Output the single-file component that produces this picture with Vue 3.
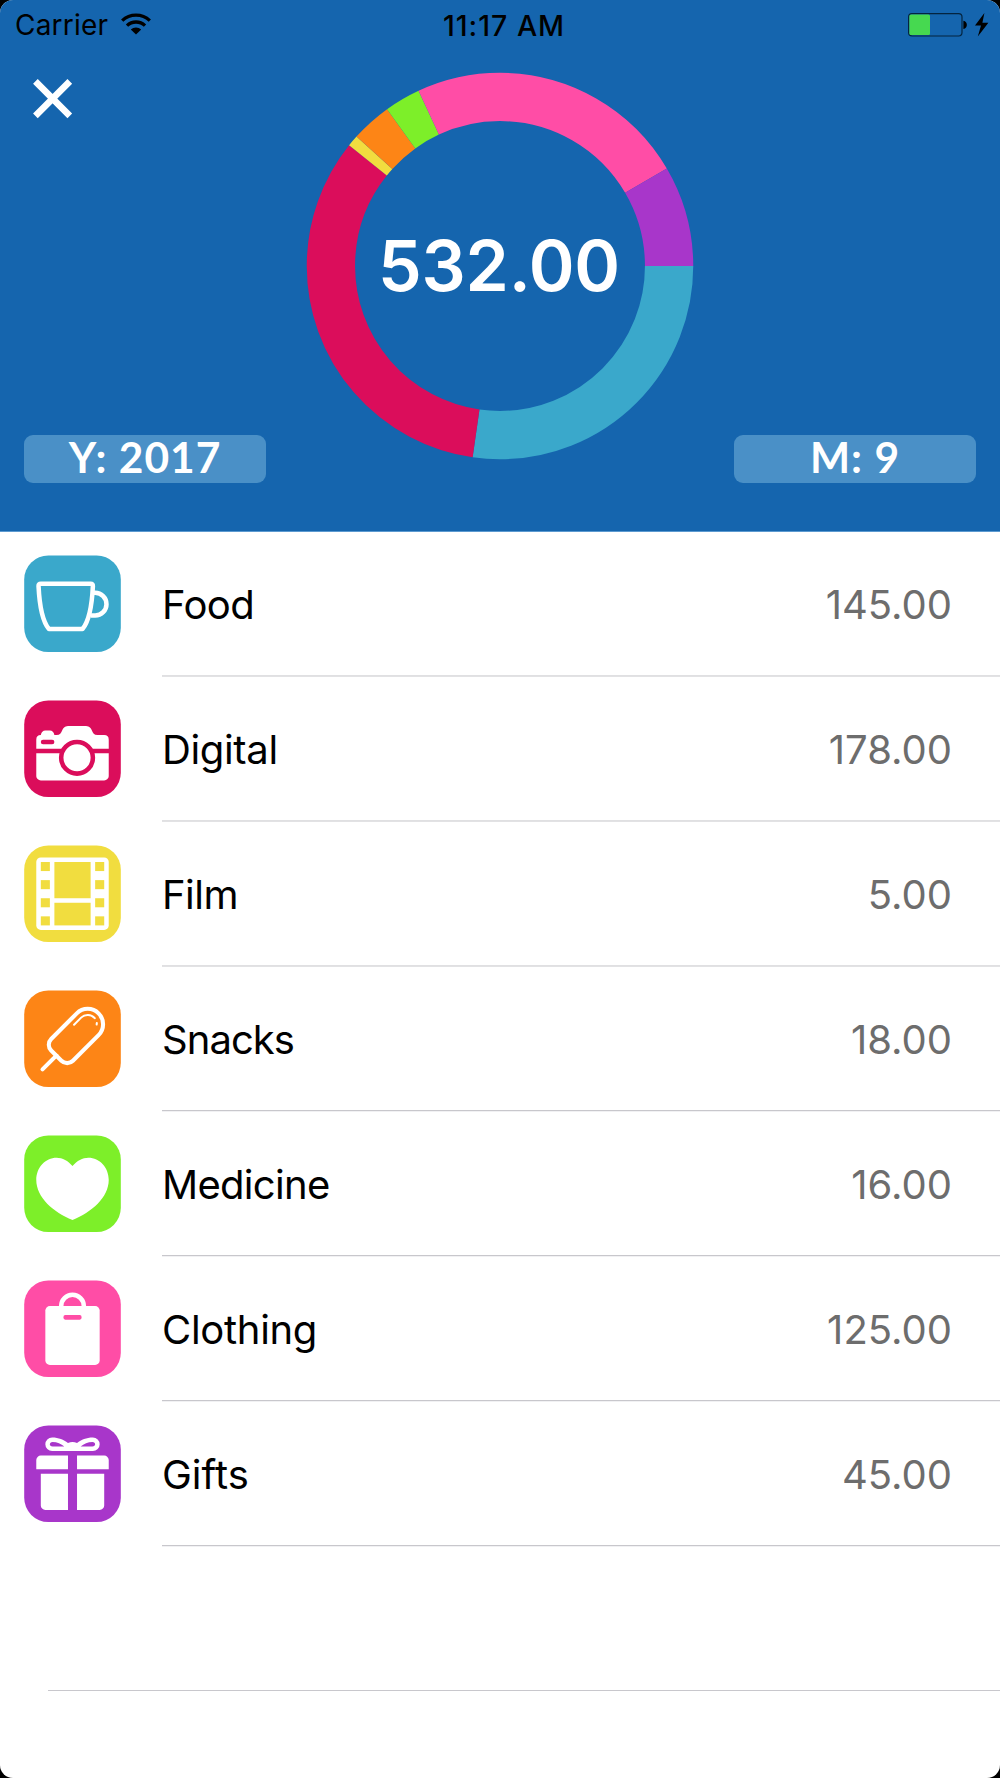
<script setup>
const RADIUS = 169.1
const LENGTH = 2 * Math.PI * RADIUS

const items = [
  { name: 'Food', amount: 145, color: '#3aa8cb', icon: 'cup', ls: -0.6 },
  { name: 'Digital', amount: 178, color: '#db0d5b', icon: 'camera', ls: -0.35 },
  { name: 'Film', amount: 5, color: '#f1dd3f', icon: 'film', ls: -0.5 },
  { name: 'Snacks', amount: 18, color: '#fd8516', icon: 'popsicle', ls: -0.95 },
  { name: 'Medicine', amount: 16, color: '#7def29', icon: 'heart', ls: -0.7 },
  { name: 'Clothing', amount: 125, color: '#ff4da6', icon: 'bag', ls: -0.3 },
  { name: 'Gifts', amount: 45, color: '#a836ca', icon: 'gift', ls: 0 },
]

const total = items.reduce((sum, item) => sum + item.amount, 0)
let before = 0
const segments = items.map((item) => {
  const segment = {
    color: item.color,
    dash: `${(item.amount / total) * LENGTH} ${LENGTH}`,
    offset: (-before / total) * LENGTH,
  }
  before += item.amount
  return segment
})
</script>

<template>
  <div class="screen">
    <header class="header">
      <div class="status">
        <div class="carrier">
          <span>Carrier</span>
          <svg class="wifi" width="30" height="22" viewBox="0 0 30 22">
            <g fill="none" stroke="#000" stroke-width="3.3">
              <path d="M1.2 7.6A20 20 0 0 1 28.8 7.6" />
              <path d="M6 12.6A13 13 0 0 1 24 12.6" />
            </g>
            <path d="M9.8 16.6A7.4 7.4 0 0 1 20.2 16.6L15 21.6Z" />
          </svg>
        </div>
        <div class="time">11:17 AM</div>
        <div class="power">
          <svg width="81" height="24" viewBox="0 0 81 24">
            <rect x="0.6" y="0.6" width="53.4" height="22.4" rx="3.4" fill="none" stroke="#04243f" stroke-width="1.2" />
            <rect x="1.4" y="1.4" width="20.6" height="20.6" rx="1.5" fill="#46d950" />
            <path d="M55.400 7.700c4.600.6 4.600 7.600 0 8.200z" />
            <path d="M76.400 0L67 12.600h6L69.800 23.400 80.400 9.800h-6z" />
          </svg>
        </div>
      </div>
      <button class="close" aria-label="Close">
        <svg width="40" height="40" viewBox="0 0 40 40">
          <path d="M2.400 2.400L36.800 36.800M36.800 2.400L2.400 36.800" stroke="#fff" stroke-width="6.600" />
        </svg>
      </button>
      <div class="summary">
        <div class="pill">Y: 2017</div>
        <div class="chart">
          <svg width="388" height="388" viewBox="-194 -194 388 388">
            <circle
              v-for="s in segments"
              :key="s.color"
              :r="RADIUS"
              fill="none"
              :stroke="s.color"
              stroke-width="48.3"
              :stroke-dasharray="s.dash"
              :stroke-dashoffset="s.offset"
            />
          </svg>
          <div class="total">{{ total.toFixed(2) }}</div>
        </div>
        <div class="pill">M: 9</div>
      </div>
    </header>

    <main class="list">
      <div v-for="(item, i) in items" :key="item.name" class="row">
        <svg class="icon" viewBox="-2.711 -2.755 21.640 21.640">
          <rect x="-2.667" y="-2.667" width="21.333" height="21.333" rx="5.333" :fill="item.color" />
          <g v-if="item.icon === 'cup'" fill="none" stroke="#fff" stroke-linejoin="round">
            <path d="M1 3.600H12Q12.500 3.600 12.500 4.100C12.300 8.300 11.700 11.800 10.200 13.600H2.800C1.300 11.800.7 8.300.5 4.100Q.5 3.600 1 3.600Z" />
            <path d="M12.600 5.600H13a2.500 2.500 0 0 1 0 5H12" />
          </g>
          <g v-else-if="item.icon === 'camera'" fill="#fff">
            <path d="M0 8V6Q0 5 1 5Q1.200 4 2 4H3Q3.800 4 4 5H4.500C6 5 5.400 3 7 3H11C12.600 3 12 5 13.500 5H15Q16 5 16 6V8Z" />
            <path d="M0 9H16V14a1 1 0 0 1-1 1H1a1 1 0 0 1-1-1Z" />
            <rect x="1" y="6" width="3" height="1" rx=".5" :fill="item.color" />
            <circle cx="9" cy="10" r="3.500" :stroke="item.color" />
          </g>
          <g v-else-if="item.icon === 'film'">
            <rect width="16" height="16" rx="1" fill="#fff" />
            <g :fill="item.color">
              <template v-for="y in [1, 5, 9, 13]" :key="y">
                <rect x="1" :y="y" width="2" height="2" />
                <rect x="13" :y="y" width="2" height="2" />
              </template>
              <rect x="4" y="1" width="8" height="8" />
              <rect x="4" y="10" width="8" height="5" />
            </g>
          </g>
          <g
            v-else-if="item.icon === 'popsicle'"
            transform="translate(11.350 4.800) rotate(45)"
            fill="none"
            stroke="#fff"
            stroke-width=".9"
            stroke-linecap="round"
          >
            <path d="M-3.400 0A3.400 3.400 0 0 1 3.400 0V8A1.800 1.800 0 0 1 1.600 9.800H-1.600A1.800 1.800 0 0 1-3.400 8Z" />
            <path d="M0 9.800V14.100" />
            <path d="M-2.050 2.200V0A2.050 2.050 0 0 1 .15-2.050M1.250-1.600L1.450-1.350" stroke-width=".45" />
          </g>
          <path
            v-else-if="item.icon === 'heart'"
            fill="#fff"
            d="M8 4.100C9 2.900 10.200 2.250 11.500 2.250C14 2.250 16 4.400 16 7.200C16 11 12.200 14.400 8 16C3.800 14.400 0 11 0 7.200C0 4.400 2 2.250 4.500 2.250C5.800 2.250 7 2.900 8 4.100Z"
          />
          <g v-else-if="item.icon === 'bag'">
            <rect x="2" y="3" width="12" height="13" rx="1" fill="#fff" />
            <path d="M5.500 3.500V3a2.500 2.500 0 0 1 5 0v.5" fill="none" stroke="#fff" />
            <rect x="6" y="5" width="4" height="1" rx=".4" :fill="item.color" />
          </g>
          <g v-else fill="#fff">
            <path
              fill-rule="evenodd"
              d="M3.500 0C5 0 6 .5 7 1.200Q8 .8 9 1.200C10 .5 11 0 12.500 0a1.500 1.500 0 0 1 0 3h-9a1.500 1.500 0 0 1 0-3ZM3.600 1C2.800 1 2.800 2 3.600 2H6.200C5.500 1.400 4.600 1 3.600 1ZM12.400 1C13.200 1 13.200 2 12.400 2H9.800C10.500 1.400 11.400 1 12.400 1Z"
            />
            <path d="M0 7V5a1 1 0 0 1 1-1H7V7ZM9 7V4h6a1 1 0 0 1 1 1V7ZM1 8H7v8H2a1 1 0 0 1-1-1ZM9 8h6v7a1 1 0 0 1-1 1H9Z" />
          </g>
        </svg>
        <div class="content" :class="{ soft: i < 3 }">
          <span class="name" :style="{ letterSpacing: item.ls + 'px' }">{{ item.name }}</span>
          <span class="amount">{{ item.amount.toFixed(2) }}</span>
        </div>
      </div>
      <div class="row blank"></div>
    </main>
  </div>
</template>

<style>
body {
  margin: 0;
  background: #000;
}
</style>

<style scoped>
.screen {
  width: 1000px;
  height: 1778px;
  overflow: hidden;
  border-radius: 13px;
  background: #fff;
  font-family: Inter, "Liberation Sans", sans-serif;
}
.header {
  position: relative;
  box-sizing: border-box;
  height: 532px;
  background: #1565ae;
  border-bottom: 1px solid #5c9ad0;
}
.status {
  display: grid;
  grid-template-columns: 1fr auto 1fr;
  height: 51px;
  font-size: 28px;
  line-height: 51px;
}
.carrier {
  display: flex;
  gap: 13px;
  padding-left: 15px;
  letter-spacing: 0.2px;
}
.wifi {
  margin-top: 13px;
}
.time {
  padding-left: 8px;
  font-size: 28.5px;
  font-weight: 500;
  letter-spacing: 1px;
}
.power {
  display: flex;
  justify-content: flex-end;
  padding: 13px 11px 0 0;
}
.close {
  position: absolute;
  left: 33px;
  top: 79px;
  width: 40px;
  height: 40px;
  padding: 0;
  border: 0;
  background: none;
}
.close svg {
  display: block;
}
.summary {
  display: flex;
  justify-content: space-between;
  align-items: flex-end;
  padding: 21px 24px 0;
}
.pill {
  width: 242px;
  height: 48px;
  margin-bottom: -23px;
  border-radius: 9px;
  background: #4a90c7;
  color: #fff;
  font: 700 42.5px/44px Lato, sans-serif;
  letter-spacing: 1px;
  text-align: center;
}
.chart {
  display: grid;
  place-items: center;
}
.chart > * {
  grid-area: 1 / 1;
}
.total {
  padding-right: 2px;
  color: #fff;
  font-size: 69.5px;
  font-weight: 570;
  letter-spacing: -0.2px;
}
.row {
  display: flex;
  align-items: center;
  height: 145px;
}
.icon {
  width: 98px;
  height: 98px;
  margin: 0 40px 1px 24px;
}
.content {
  flex: 1;
  display: flex;
  justify-content: space-between;
  align-items: center;
  box-sizing: border-box;
  height: 145px;
  padding-right: 48px;
  border-bottom: 1px solid #f1f1f3;
  box-shadow: inset 0 -1px #c8c7cc;
  font-size: 40px;
}
.content.soft {
  border-color: #e2e2e4;
  box-shadow: inset 0 -1px #e0e0e2;
}
.amount {
  color: #6d6d6d;
}
.blank {
  box-sizing: border-box;
  height: 144px;
  margin-left: 48px;
  border-bottom: 1px solid #c8c7cc;
}
</style>
